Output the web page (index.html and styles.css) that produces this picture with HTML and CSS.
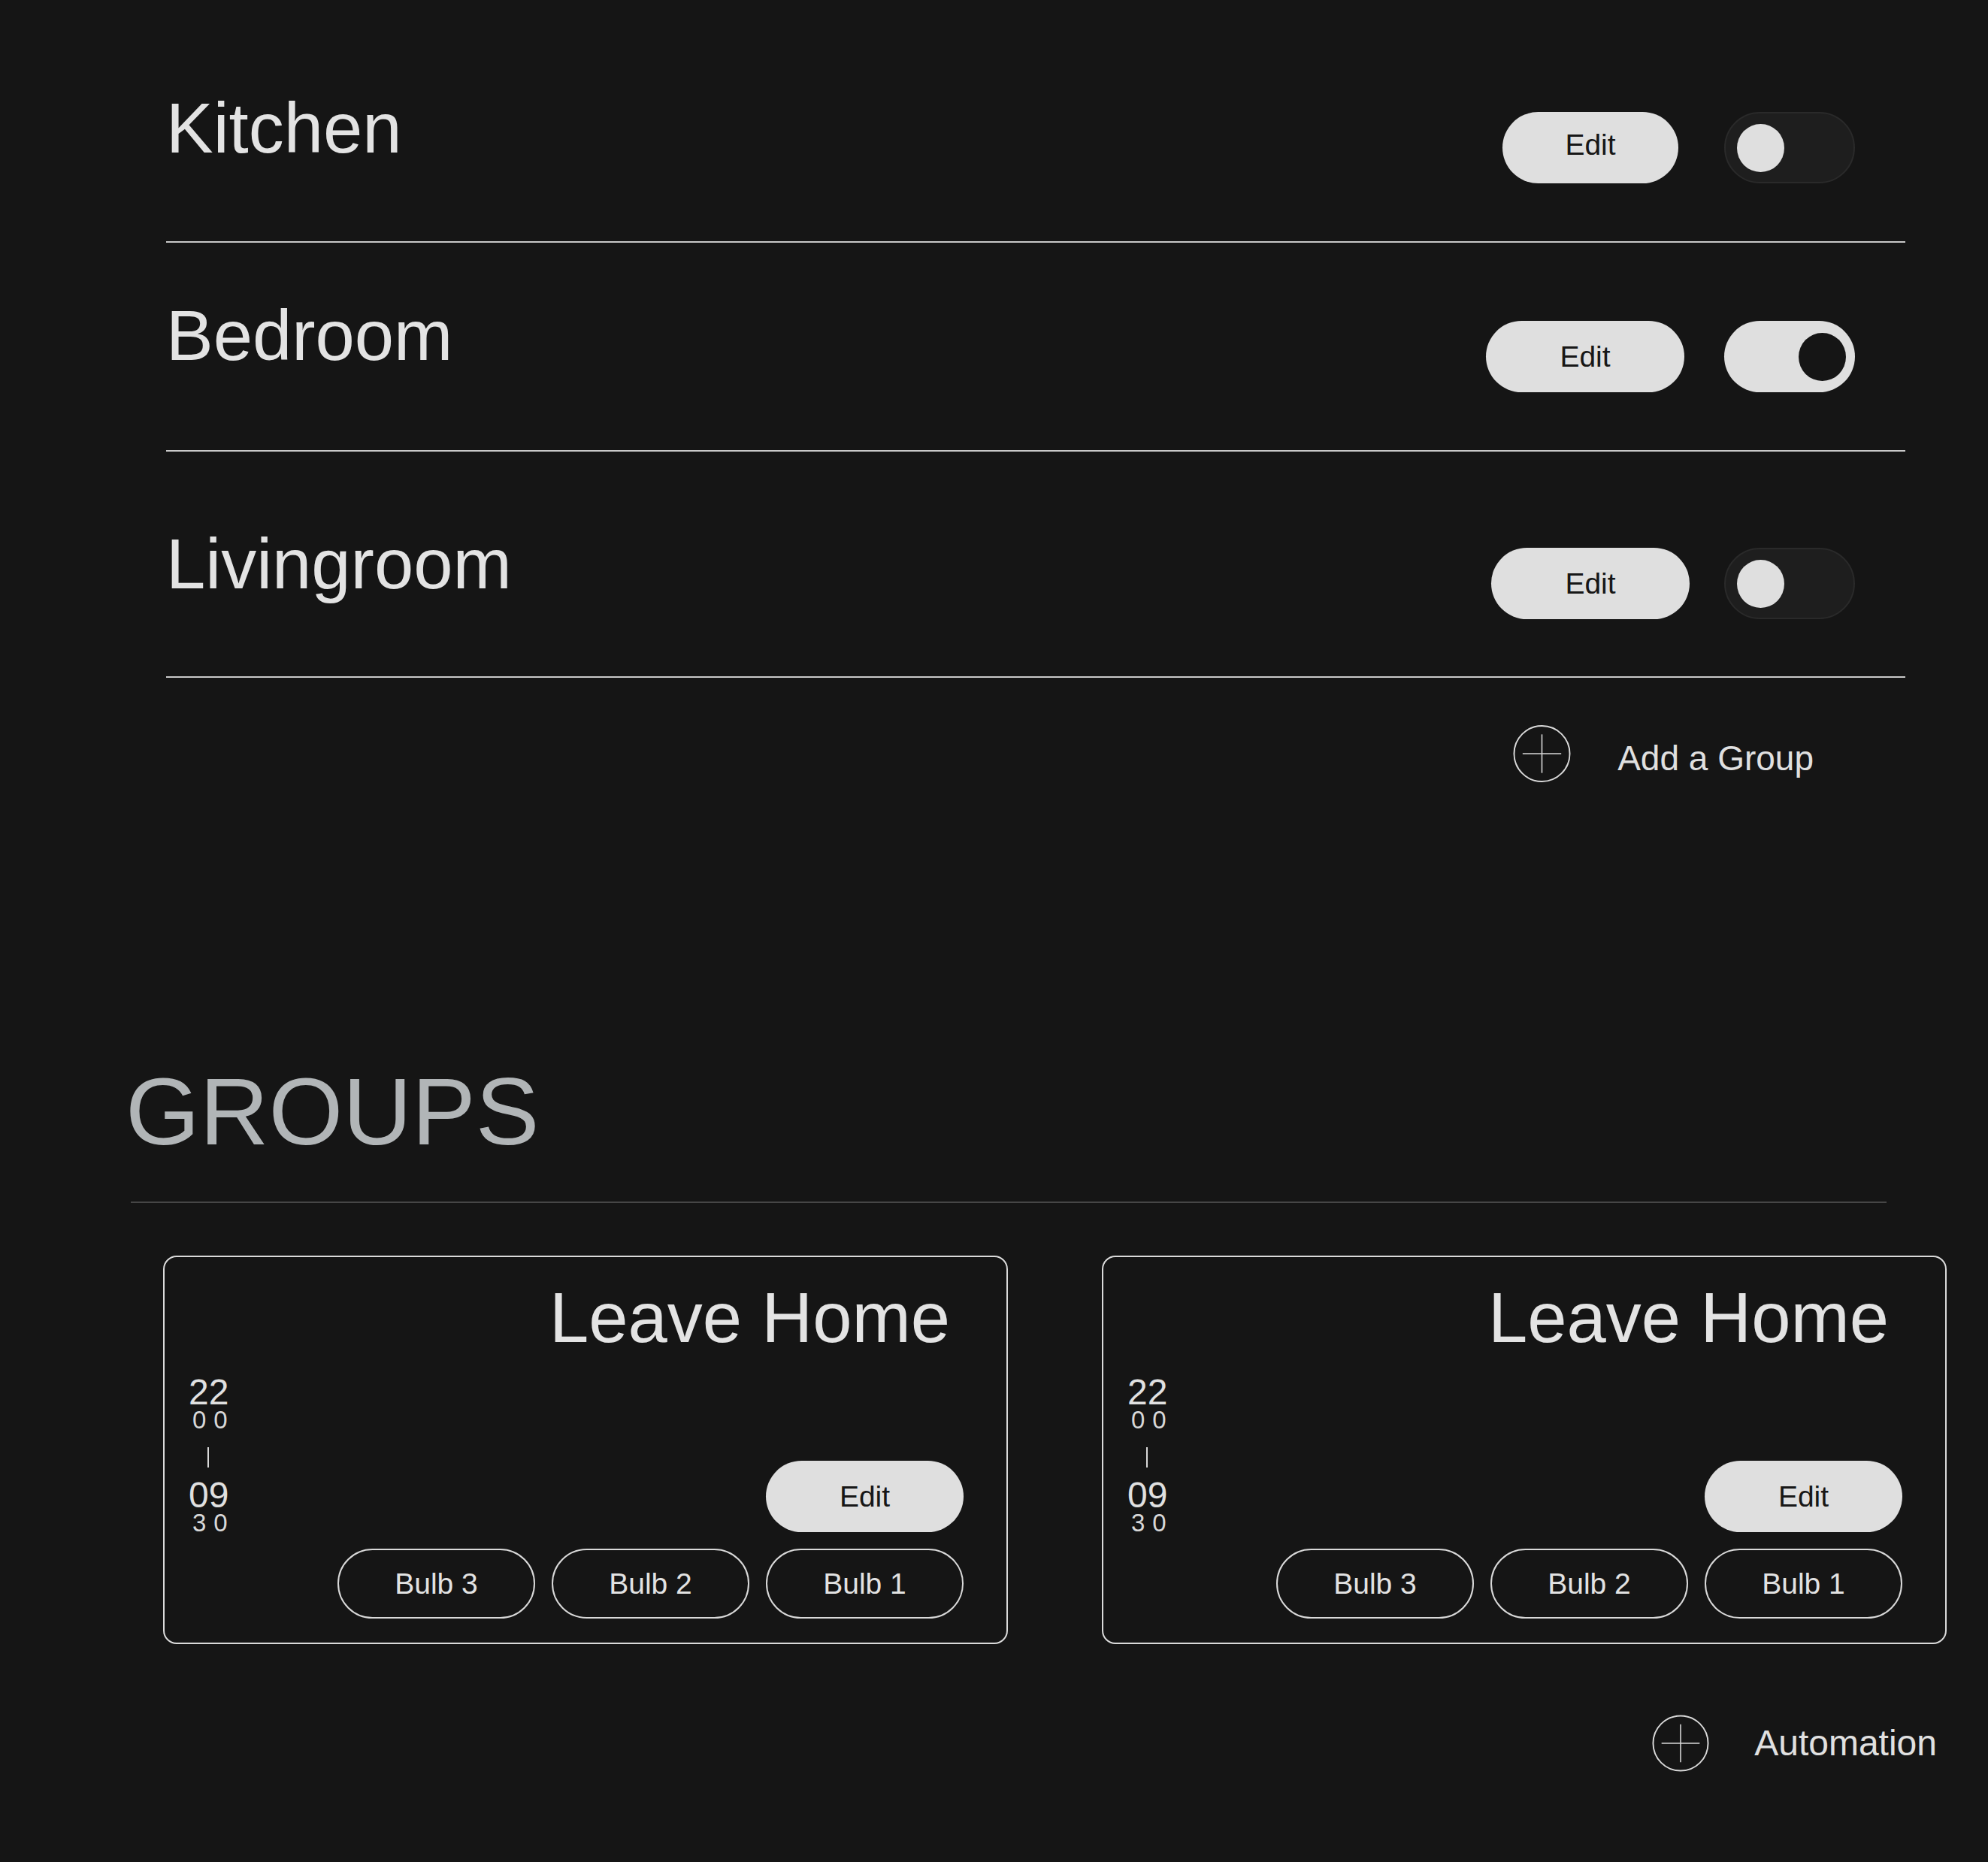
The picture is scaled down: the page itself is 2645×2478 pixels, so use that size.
FILE: index.html
```html
<!DOCTYPE html>
<html lang="en">
<head>
<meta charset="utf-8">
<title>Rooms and Groups</title>
<link rel="stylesheet" href="styles.css">
</head>
<body>
<main class="page">
  <section class="rooms">
    <div class="room room--first">
      <h2 class="room-title">Kitchen</h2>
      <div class="controls controls--first">
        <button class="edit-btn edit-btn--narrow">Edit</button>
        <div class="toggle toggle--off"><span class="knob"></span></div>
      </div>
    </div>
    <div class="room room--second">
      <h2 class="room-title">Bedroom</h2>
      <div class="controls controls--second">
        <button class="edit-btn">Edit</button>
        <div class="toggle toggle--on"><span class="knob"></span></div>
      </div>
    </div>
    <div class="room room--third">
      <h2 class="room-title">Livingroom</h2>
      <div class="controls controls--third">
        <button class="edit-btn">Edit</button>
        <div class="toggle toggle--off"><span class="knob"></span></div>
      </div>
    </div>
    <div class="add-row add-row--group">
      <svg class="plus-icon" viewBox="0 0 78 78" width="77" height="78" aria-hidden="true">
        <circle cx="39" cy="39" r="37.5" fill="none" stroke="#d9d9d9" stroke-width="2"/>
        <line x1="39" y1="13" x2="39" y2="65" stroke="#d9d9d9" stroke-width="1.6"/>
        <line x1="13" y1="39" x2="65" y2="39" stroke="#d9d9d9" stroke-width="1.6"/>
      </svg>
      <span class="add-label add-label--group">Add a Group</span>
    </div>
  </section>

  <section class="groups">
    <h1 class="groups-title">GROUPS</h1>
    <div class="groups-rule"></div>
    <div class="cards">
      <article class="card">
        <h3 class="card-title">Leave Home</h3>
        <div class="card-body">
          <div class="time">
            <span class="time-big">22</span>
            <span class="time-small">00</span>
            <span class="time-bar"></span>
            <span class="time-big time-big--end">09</span>
            <span class="time-small">30</span>
          </div>
          <div class="card-actions">
            <button class="edit-btn edit-btn--card">Edit</button>
            <div class="bulbs">
              <button class="bulb">Bulb 3</button>
              <button class="bulb">Bulb 2</button>
              <button class="bulb">Bulb 1</button>
            </div>
          </div>
        </div>
      </article>
      <article class="card">
        <h3 class="card-title">Leave Home</h3>
        <div class="card-body">
          <div class="time">
            <span class="time-big">22</span>
            <span class="time-small">00</span>
            <span class="time-bar"></span>
            <span class="time-big time-big--end">09</span>
            <span class="time-small">30</span>
          </div>
          <div class="card-actions">
            <button class="edit-btn edit-btn--card">Edit</button>
            <div class="bulbs">
              <button class="bulb">Bulb 3</button>
              <button class="bulb">Bulb 2</button>
              <button class="bulb">Bulb 1</button>
            </div>
          </div>
        </div>
      </article>
    </div>
  </section>

  <div class="add-row add-row--auto">
    <svg class="plus-icon plus-icon--auto" viewBox="0 0 78 78" width="76" height="76" aria-hidden="true">
      <circle cx="39" cy="39" r="37.5" fill="none" stroke="#d9d9d9" stroke-width="2"/>
      <line x1="39" y1="13" x2="39" y2="65" stroke="#d9d9d9" stroke-width="1.6"/>
      <line x1="13" y1="39" x2="65" y2="39" stroke="#d9d9d9" stroke-width="1.6"/>
    </svg>
    <span class="add-label add-label--auto">Automation</span>
  </div>
</main>
</body>
</html>
```

FILE: styles.css
```css
html, body {
  margin: 0;
  padding: 0;
  background: #151515;
}

body {
  font-family: "Liberation Sans", Arial, sans-serif;
  color: #e2e2e2;
  min-height: 2478px;
}

.page {
  display: flex;
  flex-direction: column;
}

/* ---------- rooms ---------- */
.rooms {
  margin: 0 110px 0 221px;
  display: flex;
  flex-direction: column;
}

.room {
  display: flex;
  justify-content: space-between;
  align-items: flex-start;
  border-bottom: 2px solid #c9c9c9;
}

.room--first { padding: 124px 0 77px; }
.room--second { padding: 77px 0 77px; }
.room--third { padding: 103px 0 76px; }

.room-title {
  margin: 0;
  font-size: 94px;
  line-height: 94px;
  font-weight: 400;
  color: #e3e3e3;
}

.controls {
  display: flex;
  align-items: center;
  margin-right: 67px;
}

.controls--first { margin-top: 25px; gap: 61px; }
.controls--second { margin-top: 27px; gap: 53px; }
.controls--third { margin-top: 25px; gap: 46px; }

.edit-btn {
  display: flex;
  align-items: center;
  justify-content: center;
  width: 264px;
  height: 95px;
  padding: 0;
  border: none;
  border-radius: 48px;
  background: #dfdfdf;
  color: #171717;
  font-family: "Liberation Sans", Arial, sans-serif;
  font-size: 39px;
  line-height: 1;
}

.edit-btn--narrow {
  width: 234px;
  padding-bottom: 8px;
}

.edit-btn--card {
  width: 263px;
}

.toggle {
  box-sizing: border-box;
  width: 174px;
  height: 95px;
  border-radius: 48px;
  display: flex;
  align-items: center;
}

.toggle--off {
  background: #1e1e1e;
  border: 2px solid #2a2a2a;
  justify-content: flex-start;
  padding-left: 15px;
}

.toggle--on {
  background: #dfdfdf;
  justify-content: flex-end;
  padding-right: 12px;
}

.knob {
  width: 63px;
  height: 64px;
  border-radius: 50%;
}

.toggle--off .knob { background: #dfdfdf; }
.toggle--on .knob { background: #151515; }

/* ---------- add rows ---------- */
.add-row {
  display: flex;
  justify-content: flex-end;
  align-items: center;
}

.add-row--group {
  margin-top: 62px;
  padding-right: 122px;
  gap: 62px;
}

.add-row--auto {
  margin-top: 94px;
  padding-right: 68px;
  gap: 60px;
}

.plus-icon {
  display: block;
  flex: none;
}

.add-label {
  font-size: 46px;
  line-height: 46px;
  color: #e0e0e0;
}

.add-label--group {
  margin-top: 12px;
}

.add-label--auto {
  font-size: 48px;
  line-height: 48px;
}

/* ---------- groups ---------- */
.groups {
  margin: 374px 135px 0 174px;
  display: flex;
  flex-direction: column;
}

.groups-title {
  margin: 0 0 0 -7px;
  font-size: 127px;
  line-height: 126px;
  font-weight: 400;
  color: #b1b5b7;
}

.groups-rule {
  height: 2px;
  margin-top: 57px;
  background: #464646;
}

.cards {
  display: flex;
  gap: 125px;
  margin: 70px 0 0 43px;
}

.card {
  flex: none;
  box-sizing: border-box;
  width: 1124px;
  border: 2px solid #dadada;
  border-radius: 18px;
  padding: 35px 57px 32px 31px;
  display: flex;
  flex-direction: column;
}

.card-title {
  margin: 0;
  padding-right: 18px;
  text-align: right;
  font-size: 94px;
  line-height: 92px;
  font-weight: 400;
  color: #e3e3e3;
}

.card-body {
  display: flex;
  justify-content: space-between;
  align-items: flex-start;
}

.time {
  margin-top: 33px;
  width: 58px;
  display: flex;
  flex-direction: column;
  align-items: flex-start;
  color: #e0e0e0;
}

.time-big {
  font-size: 48px;
  line-height: 40px;
  padding-left: 1px;
}

.time-big--end {
  margin-top: 17px;
}

.time-small {
  margin-top: 2px;
  font-size: 33px;
  line-height: 30px;
  letter-spacing: 10px;
  padding-left: 6px;
  color: #d8d8d8;
}

.time-bar {
  margin: 21px 0 0 26px;
  width: 2px;
  height: 27px;
  background: #d9d9d9;
}

.card-actions {
  margin-top: 144px;
  display: flex;
  flex-direction: column;
  align-items: flex-end;
  gap: 22px;
}

.bulbs {
  display: flex;
  gap: 22px;
}

.bulb {
  box-sizing: border-box;
  width: 263px;
  height: 93px;
  padding: 0;
  border: 2px solid #d9d9d9;
  border-radius: 47px;
  background: transparent;
  color: #e2e2e2;
  font-family: "Liberation Sans", Arial, sans-serif;
  font-size: 39px;
  line-height: 1;
}
```
